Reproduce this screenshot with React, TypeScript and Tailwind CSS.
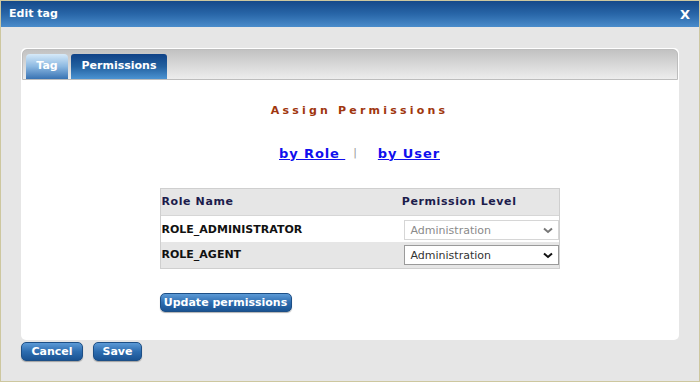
import React from "react";

const font = { fontFamily: '"DejaVu Sans", Verdana, sans-serif' };

const BlueButton = ({ children, className = "" }: { children: React.ReactNode; className?: string }) => (
  <button
    className={`h-[19px] rounded-[5px] border border-[#1d4f86] bg-gradient-to-b from-[#5c9ad6] via-[#2d6db0] to-[#1a5392] text-[11px] font-bold leading-none text-white shadow-[0_1px_1px_rgba(0,0,0,0.3)] ${className}`}
  >
    {children}
  </button>
);

const Chevron = ({ color }: { color: string }) => (
  <svg width="10" height="7" viewBox="0 0 10 7" className="absolute right-[5px] top-[6px]">
    <path d="M1 1.5 L5 5 L9 1.5" fill="none" stroke={color} strokeWidth="2" />
  </svg>
);

const Select = ({ muted }: { muted?: boolean }) => (
  <div
    className={`relative h-[20px] w-[155px] border bg-white pl-[6px] text-[11px] font-normal leading-[19px] ${
      muted ? "border-[#d6d6d6] text-[#8a8a8a]" : "border-[#9a9a9a] text-[#333]"
    }`}
  >
    Administration
    <Chevron color={muted ? "#777" : "#111"} />
  </div>
);

export default function App() {
  return (
    <div style={font} className="h-[382px] w-[700px] overflow-hidden bg-white">
      <div className="flex h-[382px] w-[700px] flex-col border border-[#cdc79f] bg-[#e6e6e6]">
        {/* title bar */}
        <div className="flex h-[26px] items-center justify-between bg-gradient-to-b from-[#16498a] via-[#2866a8] to-[#4a8ccb] pl-[8px] pr-[9px] pt-[1px] text-white">
          <span className="text-[11px] font-bold">Edit tag</span>
          <span className="text-[13px] font-bold leading-none">X</span>
        </div>

        <div className="flex flex-1 flex-col pl-[20px] pt-[21px]">
          {/* panel */}
          <div className="h-[292px] w-[658px] rounded-[5px] bg-white p-[1px]">
            {/* tab strip */}
            <div className="flex h-[31px] items-end gap-[3px] rounded-t-[5px] border border-[#bdbdbd] bg-gradient-to-b from-[#c2c2c2] to-[#ededed] pl-[3px]">
              <div className="flex h-[25px] w-[42px] items-center justify-center rounded-t-[4px] bg-gradient-to-b from-[#d6eaf9] via-[#8bb8e1] to-[#3873b3] text-[11px] font-bold text-white">
                Tag
              </div>
              <div className="flex h-[25px] w-[96px] items-center justify-center rounded-t-[3px] bg-gradient-to-b from-[#0f4287] via-[#22609f] to-[#4b93d2] text-[11px] font-bold text-white">
                Permissions
              </div>
            </div>

            {/* content */}
            <div className="flex flex-col items-center pl-[19px]">
              <div className="mt-[23px] text-[11px] font-bold tracking-[3.2px] text-[#a0360e]">Assign Permissions</div>

              <div className="mt-[24px] flex items-center text-[13px] font-bold tracking-[0.9px]">
                <span className="text-[#1010ee] underline">by Role&nbsp;</span>
                <span className="ml-[8px] text-[11px] font-normal text-[#999]">|</span>
                <span className="ml-[20px] text-[#1010ee] underline">by User</span>
              </div>

              <div className="mt-[25px] w-[400px] border border-[#cfcfcf] text-[11px]">
                <div className="flex h-[26px] items-center bg-[#e6e6e6] font-bold tracking-[0.6px] text-[#1c1c4c]">
                  <span className="pl-[1px]">Role Name</span>
                  <span className="ml-auto pr-[42px]">Permission Level</span>
                </div>
                <div className="flex h-[27px] items-center justify-between border-t border-[#d6d6d6] bg-white pt-[2px] font-bold text-[#111]">
                  <span className="pl-[1px]">ROLE_ADMINISTRATOR</span>
                  <Select muted />
                </div>
                <div className="flex h-[26px] items-center justify-between bg-[#e6e6e6] font-bold text-[#111]">
                  <span className="pl-[1px]">ROLE_AGENT</span>
                  <Select />
                </div>
              </div>

              <div className="mt-[20px] w-[400px]">
                <BlueButton className="w-[132px]">Update permissions</BlueButton>
              </div>
            </div>
          </div>

          {/* footer buttons */}
          <div className="mt-[2px] flex gap-[10px]">
            <BlueButton className="w-[62px]">Cancel</BlueButton>
            <BlueButton className="w-[49px]">Save</BlueButton>
          </div>
        </div>
      </div>
    </div>
  );
}
